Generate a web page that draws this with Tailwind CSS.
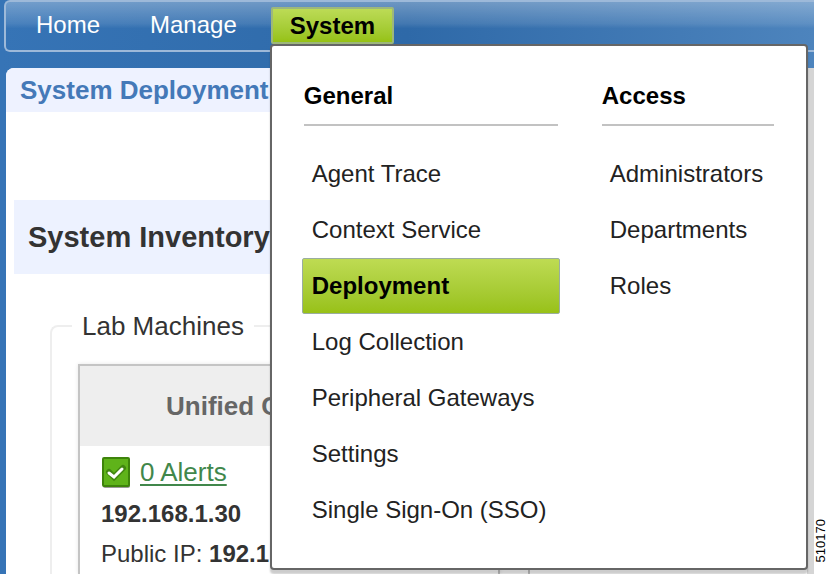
<!DOCTYPE html>
<html lang="en">
<head>
  <meta charset="UTF-8" />
  <meta name="viewport" content="width=device-width, initial-scale=1.0"/>
  <title>System Deployment</title>
  <script src="https://cdn.jsdelivr.net/npm/@tailwindcss/browser@4"></script>
</head>
<body class="flex min-h-screen overflow-hidden bg-white font-['Liberation_Sans',Arial,sans-serif] text-2xl text-[#333]">

  <div class="flex min-w-0 flex-1 flex-col bg-linear-to-r from-[#3674b6] via-[#2e69a8] to-[#4d84bd] pl-1">

    <!-- Top navigation -->
    <nav class="relative z-10 rounded-l-md border-2 border-r-0 border-[#9db9d9] bg-linear-to-b from-white/30 via-white/10 via-45% to-transparent to-55% pl-3">
      <ul class="flex gap-[14px] pt-[5px] pb-[6px]">
        <li><a href="#" class="block px-[18px] leading-[36px] text-white">Home</a></li>
        <li><a href="#" class="block px-[18px] leading-[36px] text-white">Manage</a></li>
        <li class="relative ml-[2px]">
          <button type="button" aria-expanded="true" class="block h-[37px] rounded-xs border-2 border-[#9db77c] bg-linear-to-b from-[#bcdb55] to-[#96c213] px-[17px] leading-8 font-bold text-black">System</button>

          <!-- System menu -->
          <div class="absolute top-full -left-px flex gap-[44px] rounded-sm border-2 border-[#666] bg-white px-8 pt-[34px] pb-[30px] text-[#222] shadow-[0_4px_2px_0_rgba(0,0,0,0.2)]">
            <section class="w-[254px]">
              <h2 class="mb-5 border-b-2 border-[#c2c2c2] pb-3 leading-8 font-bold text-black">General</h2>
              <ul class="-mx-[2px] leading-[54px]">
                <li><a href="#" class="block border border-transparent px-[9px]">Agent Trace</a></li>
                <li><a href="#" class="block border border-transparent px-[9px]">Context Service</a></li>
                <li><a href="#" class="block rounded-xs border border-[#9aada0] bg-linear-to-b from-[#bedb52] to-[#98c116] px-[9px] font-bold text-black">Deployment</a></li>
                <li><a href="#" class="block border border-transparent px-[9px]">Log Collection</a></li>
                <li><a href="#" class="block border border-transparent px-[9px]">Peripheral Gateways</a></li>
                <li><a href="#" class="block border border-transparent px-[9px]">Settings</a></li>
                <li><a href="#" class="block border border-transparent px-[9px] whitespace-nowrap">Single Sign-On (SSO)</a></li>
              </ul>
            </section>
            <section class="w-[172px]">
              <h2 class="mb-5 border-b-2 border-[#c2c2c2] pb-3 leading-8 font-bold text-black">Access</h2>
              <ul class="-mx-[2px] leading-[54px]">
                <li><a href="#" class="block border border-transparent px-[9px]">Administrators</a></li>
                <li><a href="#" class="block border border-transparent px-[9px]">Departments</a></li>
                <li><a href="#" class="block border border-transparent px-[9px]">Roles</a></li>
              </ul>
            </section>
          </div>
        </li>
      </ul>
    </nav>

    <!-- Page content -->
    <main class="mt-4 ml-[2px] flex-1 overflow-hidden rounded-tl-lg border-r-[7px] border-[#d5d5d5] bg-white">
      <h1 class="bg-[#eef2ff] px-[14px] text-[26px] leading-[44px] font-bold text-[#4479b8]">System Deployment</h1>

      <h2 class="mt-[88px] ml-2 bg-[#edf2ff] px-[14px] text-[29px] leading-[74px] font-bold">System Inventory</h2>

      <fieldset class="mt-9 ml-[44px] rounded-t-lg border-2 border-r-0 border-b-0 border-[#eee] pt-[22px] pl-[26px]">
        <legend class="-ml-[6px] px-[10px] text-[26px] leading-8">Lab Machines</legend>
        <div class="flex gap-7">
          <article class="w-[422px] shrink-0 border-2 border-b-0 border-[#c4c4c4] shadow-[0_0_4px_rgba(0,0,0,0.1)]">
            <h3 class="bg-[#eee] pl-[86px] text-[26px] leading-[80px] font-bold text-[#666]">Unified C</h3>
            <div class="px-[21px] leading-10">
              <div class="flex items-center gap-2 pt-[6px] pb-[2px]">
                <svg class="size-[31px] shrink-0" viewBox="0 0 31 31" aria-hidden="true">
                  <rect x="2" y="3" width="27" height="28" rx="2" fill="#999"/>
                  <rect x="2" y="1" width="26" height="28" rx="1" fill="#5fb31a" stroke="#3e840b" stroke-width="2"/>
                  <path d="M8 15l5 5 9-9" fill="none" stroke="#41860f" stroke-width="6" stroke-linecap="round"/>
                  <path d="M8 16l5 4 8-8" fill="none" stroke="#fff" stroke-width="3" stroke-linecap="round"/>
                </svg>
                <a href="#" class="text-[26px] text-[#41874b] underline decoration-2 underline-offset-3">0 Alerts</a>
              </div>
              <p class="font-bold">192.168.1.30</p>
              <p>Public IP: <b>192.1</b></p>
            </div>
          </article>
          <article class="min-w-0 flex-1 border-2 border-r-0 border-b-0 border-[#c4c4c4]">
            <div class="h-20 bg-[#eee]"></div>
          </article>
        </div>
      </fieldset>
    </main>
  </div>

  <!-- Figure number -->
  <aside class="flex w-[14px] shrink-0 items-end justify-center pb-3">
    <span class="rotate-180 text-[13px] leading-[14px] text-black [writing-mode:vertical-rl]">510170</span>
  </aside>

</body>
</html>
